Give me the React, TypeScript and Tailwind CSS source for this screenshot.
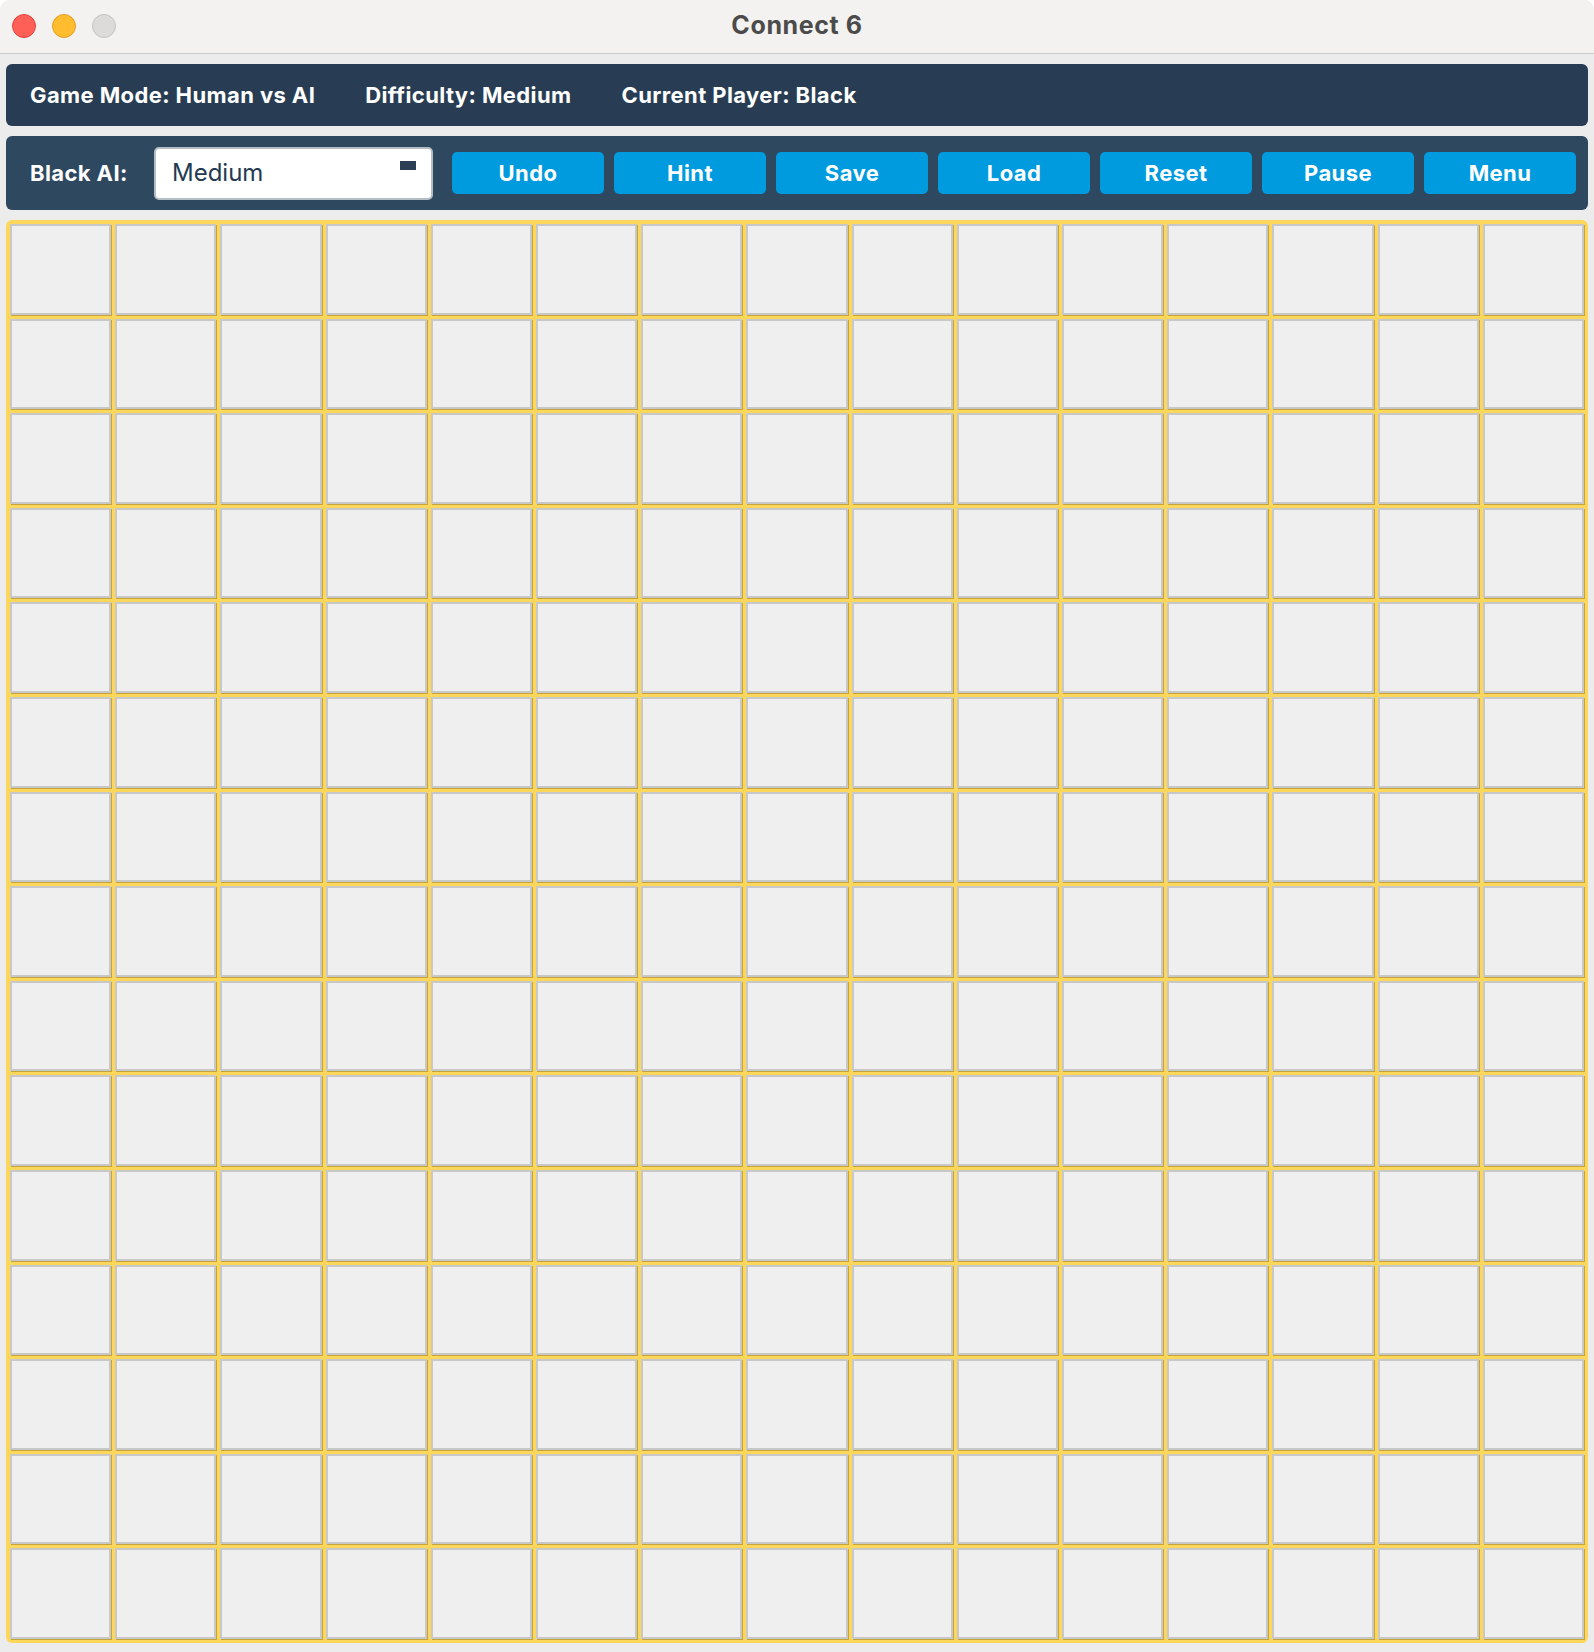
const BUTTONS = ["Undo", "Hint", "Save", "Load", "Reset", "Pause", "Menu"];
const SIZE = 15;

function TitleBar() {
  return (
    <div className="relative flex h-[54px] items-center justify-center border-b border-[#c9c8c6] bg-[#f3f2f0]">
      <div className="absolute left-[12px] top-[14px] flex gap-[16px]">
        <span className="h-[24px] w-[24px] rounded-full border border-[#e2463f] bg-[#fe5f57]" />
        <span className="h-[24px] w-[24px] rounded-full border border-[#e0a028] bg-[#febc2e]" />
        <span className="h-[24px] w-[24px] rounded-full border border-[#c4c3c1] bg-[#dcdbd9]" />
      </div>
      <h1 className="-mt-[2px] text-[25px] font-bold tracking-[0.6px] text-[#4b4b4b]">Connect 6</h1>
    </div>
  );
}

function StatusBar() {
  return (
    <div className="mx-[6px] mt-[10px] flex h-[62px] items-center gap-[50px] rounded-[6px] bg-[#283d53] pl-[24px] text-[22px] font-bold tracking-[0.4px] text-white">
      <span>Game Mode: Human vs AI</span>
      <span>Difficulty: Medium</span>
      <span>Current Player: Black</span>
    </div>
  );
}

function Controls() {
  return (
    <div className="mx-[6px] mt-[10px] flex h-[74px] items-center rounded-[6px] bg-[#2e4860] pl-[24px] pr-[10px]">
      <span className="w-[124px] text-[22px] font-bold tracking-[0.4px] text-white">Black AI:</span>
      <div className="relative flex h-[53px] w-[279px] items-center rounded-[5px] border-2 border-[#b4bcc4] bg-white pl-[16px] text-[24px] text-[#243a52]">
        Medium
        <span className="absolute right-[15px] top-[12px] h-[9px] w-[16px] bg-[#2a3f55]" />
      </div>
      <div className="ml-[19px] flex gap-[10px]">
        {BUTTONS.map((b) => (
          <button
            key={b}
            className="h-[42px] w-[152px] rounded-[5px] bg-[#009ade] text-[22px] font-bold tracking-[0.4px] text-white"
          >
            {b}
          </button>
        ))}
      </div>
    </div>
  );
}

function Board() {
  const cells = Array.from({ length: SIZE * SIZE });
  return (
    <div className="mx-[6px] mt-[10px] grid h-[1423px] grid-cols-15 grid-rows-15 gap-[4px] rounded-[6px] bg-[#fdd75b] p-[4px]">
      {cells.map((_, i) => (
        <div
          key={i}
          className="border-2 border-[#c8c8c8] bg-[#efefef] shadow-[1px_1px_0_rgba(90,70,0,0.35)]"
        />
      ))}
    </div>
  );
}

export default function App() {
  return (
    <div className="bg-white" style={{ fontFamily: "Inter, 'Noto Sans', sans-serif" }}>
      <div className="h-[1652px] w-[1594px] overflow-hidden rounded-t-[10px] bg-[#ececec]">
        <TitleBar />
        <StatusBar />
        <Controls />
        <Board />
      </div>
    </div>
  );
}
